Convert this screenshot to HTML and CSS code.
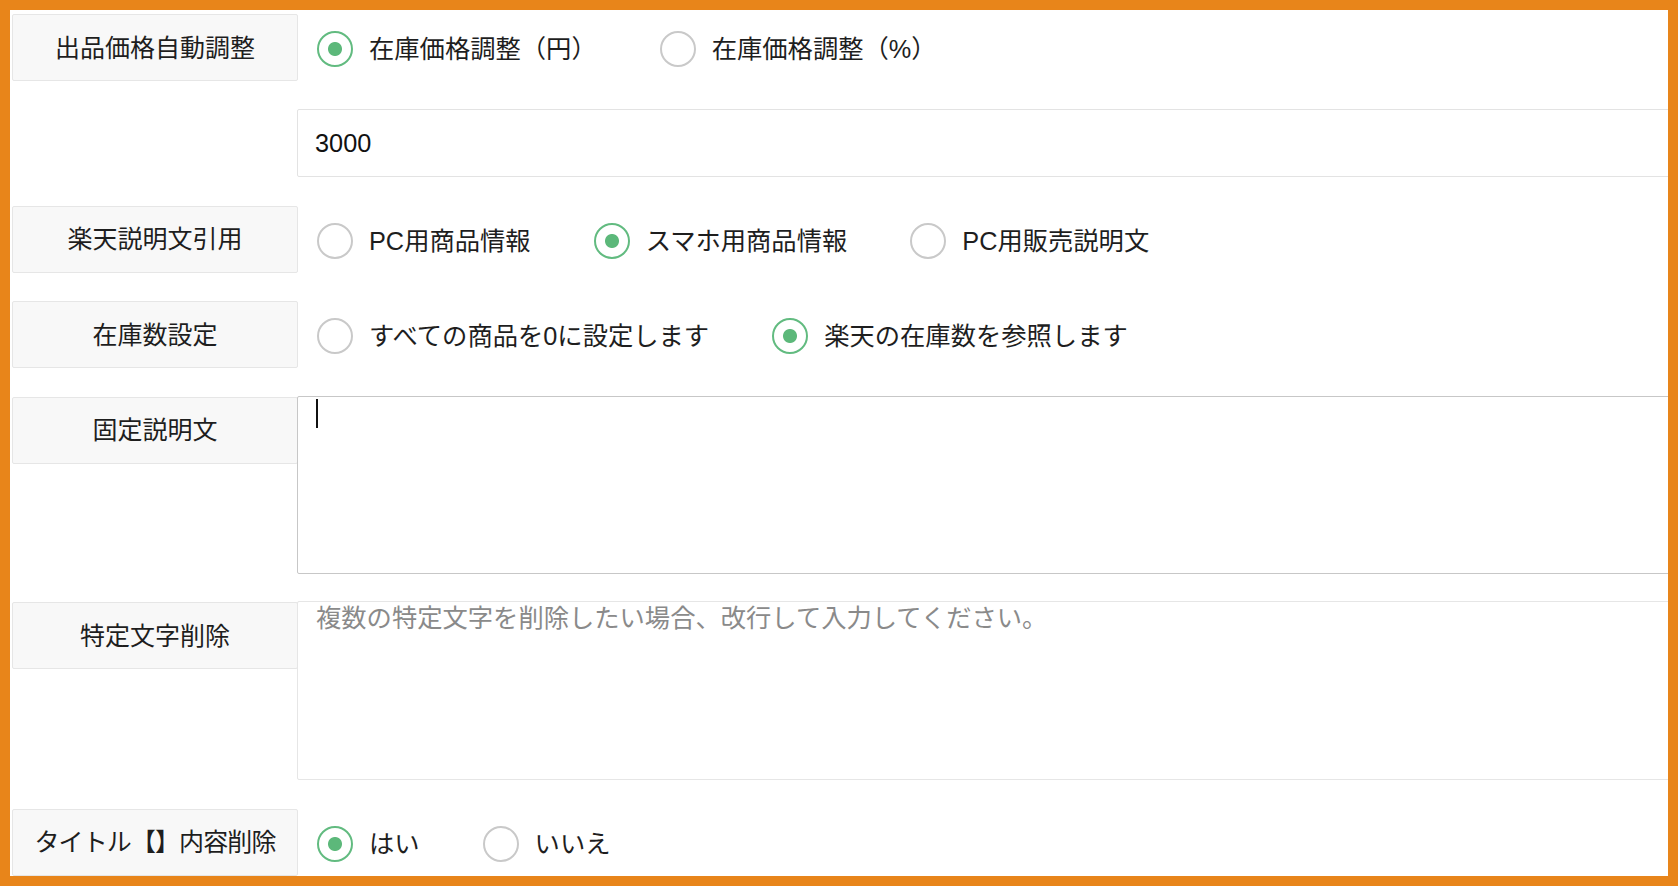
FILE: index.html
```html
<!DOCTYPE html>
<html lang="ja">
<head>
<meta charset="utf-8">
<title>出品設定</title>
<link rel="stylesheet" href="styles.css">
</head>
<body>
<div class="frame">
  <form class="form">
    <div class="field">
      <div class="field-label">出品価格自動調整</div>
      <div class="radio-group">
        <label class="radio"><input type="radio" name="price" checked><span>在庫価格調整（円）</span></label>
        <label class="radio"><input type="radio" name="price"><span>在庫価格調整（%）</span></label>
      </div>
      <input class="text-input field-control-only" type="text" value="3000">
    </div>

    <div class="field">
      <div class="field-label">楽天説明文引用</div>
      <div class="radio-group">
        <label class="radio"><input type="radio" name="desc"><span>PC用商品情報</span></label>
        <label class="radio"><input type="radio" name="desc" checked><span>スマホ用商品情報</span></label>
        <label class="radio"><input type="radio" name="desc"><span>PC用販売説明文</span></label>
      </div>
    </div>

    <div class="field">
      <div class="field-label">在庫数設定</div>
      <div class="radio-group">
        <label class="radio"><input type="radio" name="stock"><span>すべての商品を0に設定します</span></label>
        <label class="radio"><input type="radio" name="stock" checked><span>楽天の在庫数を参照します</span></label>
      </div>
    </div>

    <div class="field">
      <div class="field-label">固定説明文</div>
      <div class="textarea-wrap">
        <textarea class="textarea textarea--focused"></textarea>
        <span class="caret"></span>
      </div>
    </div>

    <div class="field">
      <div class="field-label">特定文字削除</div>
      <div class="textarea-wrap">
        <textarea class="textarea textarea--tall" placeholder="複数の特定文字を削除したい場合、改行して入力してください。"></textarea>
      </div>
    </div>

    <div class="field">
      <div class="field-label field-label--tight">タイトル【】内容削除</div>
      <div class="radio-group">
        <label class="radio"><input type="radio" name="title" checked><span>はい</span></label>
        <label class="radio"><input type="radio" name="title"><span>いいえ</span></label>
      </div>
    </div>
  </form>
</div>
</body>
</html>
```

FILE: styles.css
```css
* {
  box-sizing: border-box;
}

html, body {
  margin: 0;
  padding: 0;
  background: #ffffff;
}

body {
  font-family: "Liberation Sans", "Noto Sans CJK JP", sans-serif;
  color: #222222;
}

.frame {
  width: 1678px;
  height: 886px;
  border: 10px solid #e8851a;
  overflow: hidden;
  background: #ffffff;
}

.form {
  padding: 4px 0 0 2px;
  margin: 0;
}

.field {
  display: grid;
  grid-template-columns: 285px 1400px;
  row-gap: 28px;
  margin-bottom: 28.5px;
  align-items: start;
}

.field-label {
  width: calc(100% + 1px);
  height: 67px;
  display: flex;
  align-items: center;
  justify-content: center;
  background: #f8f8f8;
  border: 1px solid #e6e6e6;
  border-radius: 2px;
  font-size: 25px;
  line-height: 30px;
  color: #1e1e1e;
  white-space: nowrap;
}

.field-label--tight {
  letter-spacing: -0.9px;
}

.radio-group {
  height: 67px;
  display: flex;
  align-items: center;
  padding: 3px 0 0 20px;
}

.radio {
  display: inline-flex;
  align-items: center;
  margin-right: 63px;
  font-size: 25.3px;
  line-height: 30px;
  color: #1e1e1e;
  white-space: nowrap;
}

.radio input {
  appearance: none;
  -webkit-appearance: none;
  width: 36px;
  height: 36px;
  margin: 0 16px 0 0;
  border: 2px solid #c9c9c9;
  border-radius: 50%;
  background: #ffffff;
  flex: none;
}

.radio input:checked {
  border-color: #62bb80;
  background: radial-gradient(circle, #5cb87a 0 6.5px, #ffffff 7.5px);
}

.text-input {
  display: block;
  width: 100%;
  height: 68px;
  padding: 0 0 0 17px;
  border: 1px solid #e3e3e3;
  border-radius: 2px;
  font-family: "Liberation Sans", "Noto Sans CJK JP", sans-serif;
  font-size: 25.3px;
  color: #111111;
  background: #ffffff;
  outline: none;
}

.field-control-only {
  grid-column: 2;
}

.textarea-wrap {
  position: relative;
}

.textarea {
  display: block;
  width: 100%;
  height: 178px;
  margin: -1px 0 0 0;
  padding: 1px 0 0 18px;
  border: 1px solid #c7c7c7;
  border-radius: 2px;
  font-family: "Liberation Sans", "Noto Sans CJK JP", sans-serif;
  font-size: 25.3px;
  line-height: 30px;
  color: #111111;
  background: #ffffff;
  resize: none;
  outline: none;
}

.textarea--tall {
  height: 179px;
  border-color: #e6e6e6;
}

.textarea::placeholder {
  color: #8a8a8a;
  opacity: 1;
}

.caret {
  position: absolute;
  left: 19px;
  top: 2px;
  width: 2px;
  height: 29px;
  background: #111111;
}
```
